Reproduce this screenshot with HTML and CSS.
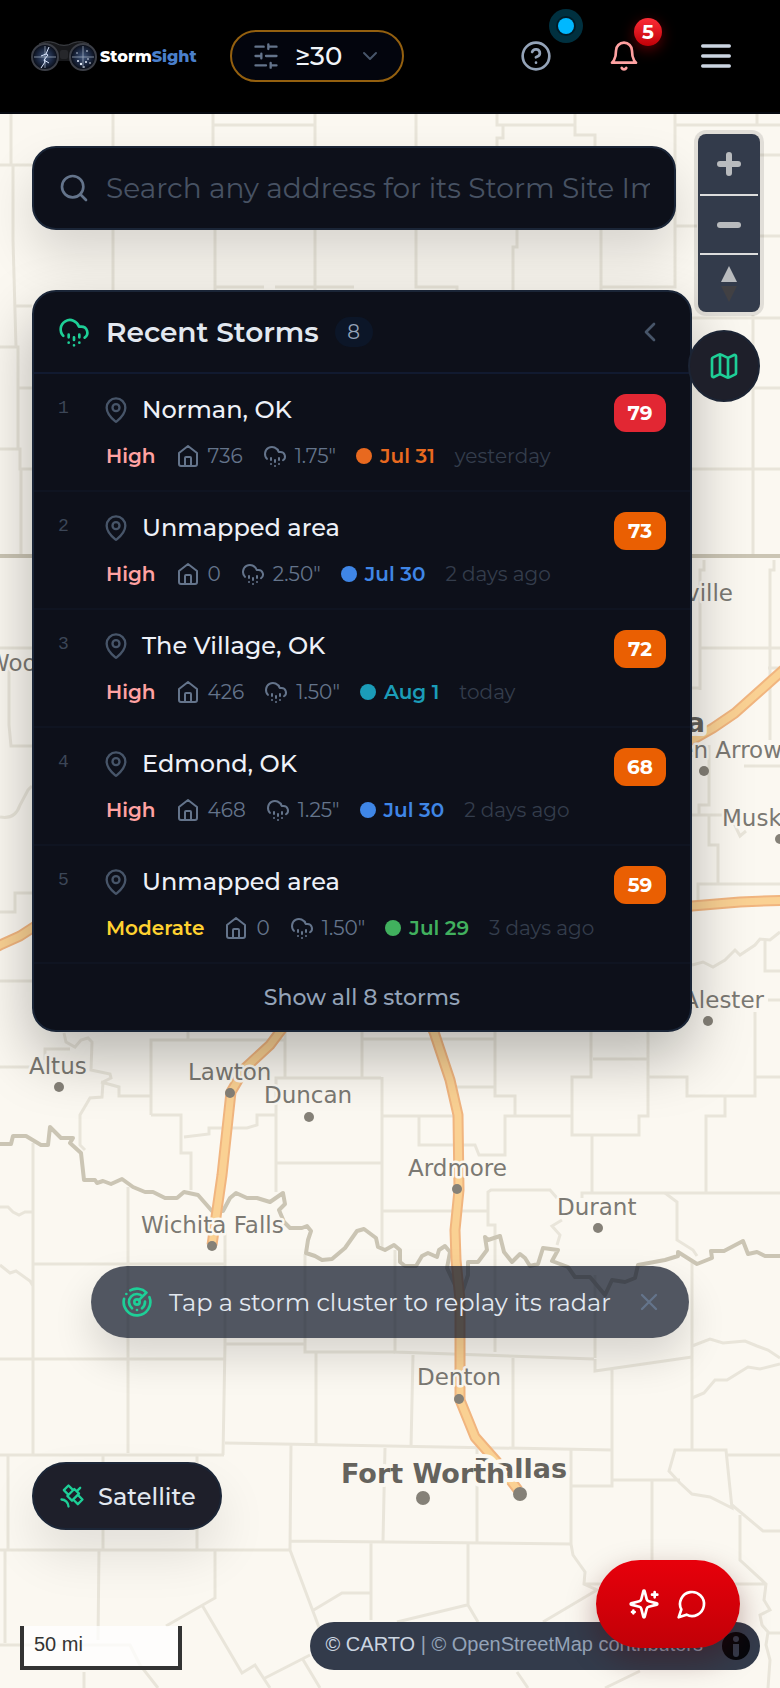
FILE: index.html
```html
<!DOCTYPE html>
<html lang="en">
<head>
  <meta charset="UTF-8">
  <meta name="viewport" content="width=device-width, initial-scale=1.0">
  <title>StormSight</title>
  <link rel="stylesheet" href="styles.css">
</head>
<body>
  <!-- shared icons -->
  <svg class="sprite" aria-hidden="true">
    <symbol id="i-hail" viewBox="0 0 24 24"><path d="M4 14.899A7 7 0 1 1 15.71 8h1.79a4.5 4.5 0 0 1 2.5 8.242M16 14v2M8 14v2M16 20h.01M8 20h.01M12 16v2M12 22h.01"/></symbol>
    <symbol id="i-pin" viewBox="0 0 24 24"><path d="M20 10c0 4.993-5.539 10.193-7.399 11.799a1 1 0 0 1-1.202 0C9.539 20.193 4 14.993 4 10a8 8 0 0 1 16 0"/><circle cx="12" cy="10" r="3"/></symbol>
    <symbol id="i-home" viewBox="0 0 24 24"><path d="m3 9 9-7 9 7v11a2 2 0 0 1-2 2H5a2 2 0 0 1-2-2zM9 22v-8a1 1 0 0 1 1-1h4a1 1 0 0 1 1 1v8"/></symbol>
  </svg>

  <header class="topbar">
    <a class="logo" href="#">
      <svg class="logo-mark" viewBox="0 0 66 34" aria-hidden="true">
        <defs>
          <radialGradient id="lens">
            <stop offset="0" stop-color="#41577c"/>
            <stop offset="0.6" stop-color="#1b2740"/>
            <stop offset="1" stop-color="#070a12"/>
          </radialGradient>
        </defs>
        <path d="M6 7 Q14 0 24 3 Q33 8 42 3 Q52 0 60 7 L50 22 H16z" fill="#17181b"/>
        <path d="M8 5 Q15 1 24 4 Q33 9 42 4 Q51 1 58 5" fill="none" stroke="#3b3d42"/>
        <rect x="29" y="11" width="8" height="9" rx="2" fill="#26272b"/>
        <circle cx="14" cy="18" r="13" fill="url(#lens)" stroke="#3c3f47" stroke-width="2"/>
        <circle cx="52" cy="18" r="13" fill="url(#lens)" stroke="#3c3f47" stroke-width="2"/>
        <path d="M3 18h22M14 7v22M41 18h22M52 7v22" stroke="#9aa6b8" stroke-width="0.8"/>
        <path d="M18 8l-3 7 2 1-4 5 1 2-4 6M15 15l-5 2M13 21l5 3" fill="none" stroke="#dce8ff"/>
        <g fill="#e6eefc"><circle cx="47" cy="22" r="1"/><circle cx="50" cy="25" r="1.2"/><circle cx="55" cy="23" r="1"/><circle cx="57" cy="20" r="0.8"/><circle cx="53" cy="28" r="0.8"/><circle cx="46" cy="14" r="0.7"/><circle cx="56" cy="12" r="0.8"/><circle cx="59" cy="24" r="0.8"/></g>
      </svg>
      <span class="logo-text">Storm<span class="logo-blue">Sight</span></span>
    </a>
    <button class="filter" type="button" aria-label="Minimum score">
      <svg class="icon icon-28" viewBox="0 0 24 24"><path d="M21 4h-7M10 4H3M21 12h-9M8 12H3M21 20h-5M12 20H3M14 2v4M8 10v4M16 18v4"/></svg>
      <span>≥30</span>
      <svg class="icon icon-24 dim" viewBox="0 0 24 24"><path d="m6 9 6 6 6-6"/></svg>
    </button>
    <nav class="actions">
      <button class="action help" type="button" aria-label="Help">
        <svg class="icon icon-32" viewBox="0 0 24 24"><circle cx="12" cy="12" r="10"/><path d="M9.09 9a3 3 0 0 1 5.83 1c0 2-3 3-3 3M12 17h.01"/></svg>
        <span class="pulse"></span>
      </button>
      <button class="action bell" type="button" aria-label="Alerts">
        <svg class="icon icon-32" viewBox="0 0 24 24"><path d="M6 8a6 6 0 0 1 12 0c0 7 3 9 3 9H3s3-2 3-9M10.300 21a1.940 1.940 0 0 0 3.400 0"/></svg>
        <span class="count">5</span>
      </button>
      <button class="action menu" type="button" aria-label="Menu">
        <svg class="icon icon-40" viewBox="0 0 24 24"><path d="M4 6h16M4 12h16M4 18h16"/></svg>
      </button>
    </nav>
  </header>

  <main class="map">
    <svg class="map-canvas" viewBox="0 114 780 1574" preserveAspectRatio="xMidYMin slice" aria-label="Map">
      <!-- county lines -->
      <g class="county">
        <path d="M11 114V165M0 165H32M13 165V240L16 347M113 114V290M213 114V146M213 125H315M315 114V290M416 114V287H457V290M215 230V290M216 287H264M275 287H354"/>
        <path d="M497 114V125H575M503 125V138H497V146M575 114V135H595V146M675 114V287H601M675 125H780M757 114V125M760 155H780M675 226H697M760 236H780M517 230V247H513V290M601 230V290"/>
        <path d="M16 306H32M0 347H18V449M18 388H32M0 449H20V469H32M21 469V555M0 648H32M9 670V725L11 746H32M0 817Q15 820 20 805L28 790 32 786M32 893H15V912H0M0 981H32"/>
        <path d="M692 318H780M753 315V555M753 388H780M692 469H780M704 560V570H700V690M774 560V570H770V740M700 648H780M768 668H780M692 688H700M744 766H780M709 745V805H699V814M692 815H730L740 836 746 831M709 815V845H718V883M698 900V884H780"/>
        <path d="M692 965 703 962 713 967 725 960 735 950 740 955 755 945 760 939 770 940 780 932M765 940V971H780M768 1000H780"/>
        <path d="M64 1033 66 1042 75 1047 81 1040 88 1038 92 1042 91 1070 110 1074 111 1078 103 1082 102 1097 90 1098 80 1115 80 1145 85 1150M45 1060V1049H70M0 1067H30M101 1082 119 1087V1096H151M151 1115V1040H285M188 1032V1039M151 1115H181V1153H191V1190M184 1137 209 1134V1128H247L257 1125V1115H275M276 1192V1078H381M285 1032V1077M362 1032V1077M362 1039H495M382 1077V1250M276 1163H381"/>
        <path d="M33 1143V1455M0 1207H8L13 1212 19 1215 25 1212H33M33 1264H225M128 1187V1453M225 1230V1344L223 1455M305 1254V1352H395M225 1344H305M0 1359H225M0 1265 10 1273 16 1271 30 1281 33 1286M381 1211H488"/>
        <path d="M382 1116H453M419 1116V1145H475L479 1155H505V1116H571M495 1032V1096H515V1115M455 1087H495M591 1032V1077H572V1135H639V1116H648V1032M593 1059H648M648 1077H687V1096H755V1012M755 1077H780M725 1096V1116H706V1193M592 1135V1193M582 1198V1193H780"/>
        <path d="M488 1212V1192L491 1190H550L557 1198M488 1212V1225H495V1352M562 1220 552 1226 560 1235 557 1245M665 1193 677 1202V1240L693 1250 697 1256M692 1262V1450M595 1275V1358M395 1250V1352L594 1359M692 1346 710 1339 723 1343 745 1341 757 1346 768 1350 780 1358"/>
        <path d="M0 1455H224M225 1443 612 1450M316 1352V1445M8 1456V1550M103 1456V1550M197 1456V1550M291 1445 290 1550M385 1448 383 1541M0 1550H290M290 1541 571 1544M5 1550V1643M99 1550 98 1640M215 1550V1598L166 1626M290 1550 320 1630M202 1605 242 1673 255 1665 270 1688M312 1611 342 1593H371M371 1542V1620M265 1678 310 1655M302 1658 320 1688M84 1672V1688M0 1645H130L140 1665 158 1688"/>
        <path d="M413 1355 411 1447M513 1358V1448M571 1448V1544L573 1555 585 1572 584 1584 597 1590 543 1622M612 1370V1486H572M595 1359V1371L692 1357M612 1480H680M675 1450H726L732 1508 710 1497 692 1494 680 1483 669 1471zM728 1455H780M732 1505 763 1531H780M740 1515V1560L766 1584 764 1600 770 1610 760 1615 762 1625 768 1632 766 1645 770 1660 768 1688M652 1481V1585M585 1584H765M477 1449V1542M468 1543V1605L478 1622M397 1622 467 1605M692 1398 704 1393 715 1380 727 1380 748 1367 760 1369 780 1364M517 1672 528 1688M768 1633H780M605 1688 640 1671"/>
      </g>
      <!-- state lines -->
      <g class="state">
        <path d="M0 556H780"/>
        <path d="M0 1144H11L13 1136H26L41 1145H48L50 1127 61 1138H73L70 1143 81 1153 84 1180H95L97 1183 103 1181 111 1184 122 1179 133 1187 145 1192H153L165 1198H177L184 1192 198 1195 212 1211H223L230 1198 236 1193 247 1198H257L270 1202 283 1193 285 1204 279 1210 284 1222 290 1228H302L307 1226 311 1231 308 1240 306 1253 315 1256 322 1260 332 1259 345 1248 357 1231 364 1229 376 1238 378 1247 385 1250 394 1245 400 1250V1262L405 1266H416L422 1256 428 1253 437 1257 439 1250 445 1246 450 1252 447 1268 455 1285 463 1290 468 1275 468 1262 478 1262 487 1250 485 1237 488 1240 500 1236 504 1252 512 1262 520 1254 525 1258 530 1266 538 1264 543 1248 558 1250 552 1261 568 1267 575 1277H590L605 1295 612 1280 625 1282 635 1278 638 1265 665 1260 678 1256V1252L697 1264 712 1258 711 1251H724L743 1241 748 1254 757 1252 765 1256H780"/>
      </g>
      <!-- interstates -->
      <g class="road-edge">
        <path id="i44" d="M285 1025 270 1045 245 1068 231 1092 222 1175 212 1245"/>
        <path id="i35" d="M420 1000 434 1032 450 1080 458 1115 459 1190 455 1230 456 1260 460 1300V1400L475 1437 497 1462 518 1490"/>
        <path id="ne" d="M670 750 692 740 713 728 735 713 790 664"/>
        <path id="i40" d="M680 908 692 906 740 902 790 900M-10 950 0 945 20 936 40 923"/>
      </g>
      <g class="road">
        <use href="#i44"/><use href="#i35"/><use href="#ne"/><use href="#i40"/>
      </g>
      <g class="dots">
        <circle cx="59" cy="1087" r="5"/><circle cx="230" cy="1093" r="5"/><circle cx="309" cy="1117" r="5"/>
        <circle cx="212" cy="1246" r="5"/><circle cx="457" cy="1189" r="5"/><circle cx="598" cy="1228" r="5"/>
        <circle cx="459" cy="1399" r="5"/><circle cx="704" cy="771" r="5"/><circle cx="780" cy="839" r="5"/>
        <circle cx="708" cy="1021" r="5"/><circle cx="423" cy="1498" r="7"/><circle cx="520" cy="1494" r="7"/>
      </g>
      <g class="town">
        <text x="29" y="1074">Altus</text>
        <text x="188" y="1080">Lawton</text>
        <text x="264" y="1103">Duncan</text>
        <text x="141" y="1233">Wichita Falls</text>
        <text x="408" y="1176">Ardmore</text>
        <text x="557" y="1215">Durant</text>
        <text x="417" y="1385">Denton</text>
        <text x="733" y="601" text-anchor="end">Bartlesville</text>
        <text x="782" y="758" text-anchor="end">Broken Arrow</text>
        <text x="722" y="826">Muskogee</text>
        <text x="764" y="1008" text-anchor="end">McAlester</text>
        <text x="-13" y="671">Woodward</text>
      </g>
      <g class="town city">
        <text x="705" y="732" text-anchor="end">Tulsa</text>
        <text x="567" y="1478" text-anchor="end">Dallas</text>
        <text x="341" y="1483">Fort Worth</text>
      </g>
    </svg>

    <div class="column">
      <label class="search">
        <svg class="icon icon-32" viewBox="0 0 24 24"><circle cx="11" cy="11" r="8"/><path d="m21 21-4.300-4.300"/></svg>
        <input type="text" aria-label="Search any address" placeholder="Search any address for its Storm Site Impact">
      </label>

      <section class="panel">
        <div class="panel-head">
          <svg class="icon icon-32 green"><use href="#i-hail"/></svg>
          <h2>Recent Storms</h2>
          <span class="total">8</span>
          <button class="collapse" type="button" aria-label="Collapse">
            <svg class="icon icon-32" viewBox="0 0 24 24"><path d="m15 18-6-6 6-6"/></svg>
          </button>
        </div>
        <ol class="storms">
          <li class="storm">
            <span class="rank">1</span>
            <div class="info">
              <div class="place"><svg class="icon icon-28"><use href="#i-pin"/></svg>Norman, OK</div>
              <div class="meta">
                <span class="level high">High</span>
                <span class="stat"><svg class="icon icon-24"><use href="#i-home"/></svg>736</span>
                <span class="stat"><svg class="icon icon-24"><use href="#i-hail"/></svg>1.75"</span>
                <span class="date orange">Jul 31</span>
                <span class="ago">yesterday</span>
              </div>
            </div>
            <span class="score severe">79</span>
          </li>
          <li class="storm">
            <span class="rank">2</span>
            <div class="info">
              <div class="place"><svg class="icon icon-28"><use href="#i-pin"/></svg>Unmapped area</div>
              <div class="meta">
                <span class="level high">High</span>
                <span class="stat"><svg class="icon icon-24"><use href="#i-home"/></svg>0</span>
                <span class="stat"><svg class="icon icon-24"><use href="#i-hail"/></svg>2.50"</span>
                <span class="date blue">Jul 30</span>
                <span class="ago">2 days ago</span>
              </div>
            </div>
            <span class="score">73</span>
          </li>
          <li class="storm">
            <span class="rank">3</span>
            <div class="info">
              <div class="place"><svg class="icon icon-28"><use href="#i-pin"/></svg>The Village, OK</div>
              <div class="meta">
                <span class="level high">High</span>
                <span class="stat"><svg class="icon icon-24"><use href="#i-home"/></svg>426</span>
                <span class="stat"><svg class="icon icon-24"><use href="#i-hail"/></svg>1.50"</span>
                <span class="date teal">Aug 1</span>
                <span class="ago">today</span>
              </div>
            </div>
            <span class="score">72</span>
          </li>
          <li class="storm">
            <span class="rank">4</span>
            <div class="info">
              <div class="place"><svg class="icon icon-28"><use href="#i-pin"/></svg>Edmond, OK</div>
              <div class="meta">
                <span class="level high">High</span>
                <span class="stat"><svg class="icon icon-24"><use href="#i-home"/></svg>468</span>
                <span class="stat"><svg class="icon icon-24"><use href="#i-hail"/></svg>1.25"</span>
                <span class="date blue">Jul 30</span>
                <span class="ago">2 days ago</span>
              </div>
            </div>
            <span class="score">68</span>
          </li>
          <li class="storm">
            <span class="rank">5</span>
            <div class="info">
              <div class="place"><svg class="icon icon-28"><use href="#i-pin"/></svg>Unmapped area</div>
              <div class="meta">
                <span class="level moderate">Moderate</span>
                <span class="stat"><svg class="icon icon-24"><use href="#i-home"/></svg>0</span>
                <span class="stat"><svg class="icon icon-24"><use href="#i-hail"/></svg>1.50"</span>
                <span class="date lime">Jul 29</span>
                <span class="ago">3 days ago</span>
              </div>
            </div>
            <span class="score">59</span>
          </li>
        </ol>
        <button class="show-all" type="button">Show all 8 storms</button>
      </section>
    </div>

    <div class="map-tools">
      <div class="zoom">
        <button type="button" aria-label="Zoom in"><svg viewBox="0 0 58 58"><path d="M29 20v18M20 29h18"/></svg></button>
        <button type="button" aria-label="Zoom out"><svg viewBox="0 0 58 58"><path d="M20 29h18"/></svg></button>
        <button type="button" aria-label="Reset north"><svg viewBox="0 0 58 58"><path class="north" d="M29 11l8 16H21z"/><path class="south" d="M29 47l8-16H21z"/></svg></button>
      </div>
      <button class="layers" type="button" aria-label="Map layers">
        <svg class="icon icon-32 green" viewBox="0 0 24 24"><path d="M14.106 5.553a2 2 0 0 0 1.788 0l3.659-1.830A1 1 0 0 1 21 4.619v12.764a1 1 0 0 1-.553.894l-4.553 2.277a2 2 0 0 1-1.788 0l-4.212-2.106a2 2 0 0 0-1.788 0l-3.659 1.830A1 1 0 0 1 3 19.381V6.618a1 1 0 0 1 .553-.894l4.553-2.277a2 2 0 0 1 1.788 0zM15 5.764v15M9 3.236v15"/></svg>
      </button>
    </div>

    <div class="toast" role="status">
      <svg class="icon icon-32 green" viewBox="0 0 24 24"><path d="M19.070 4.930A10 10 0 0 0 6.990 3.340M4 6h.01M2.290 9.620A10 10 0 1 0 21.310 8.350M16.240 7.760A6 6 0 1 0 8.230 16.670M12 18h.01M17.990 11.660A6 6 0 0 1 15.770 16.670M13.410 10.590l5.660-5.660"/><circle cx="12" cy="12" r="2"/></svg>
      <span>Tap a storm cluster to replay its radar</span>
      <button class="close" type="button" aria-label="Dismiss">
        <svg class="icon icon-28" viewBox="0 0 24 24"><path d="M18 6 6 18M6 6l12 12"/></svg>
      </button>
    </div>

    <button class="satellite" type="button">
      <svg class="icon icon-28 green" viewBox="0 0 24 24"><path d="M13 7 9 3 5 7l4 4M17 11l4 4-4 4-4-4M8 12l4 4 6-6-4-4ZM16 8l3-3M9 21a6 6 0 0 0-6-6"/></svg>
      Satellite
    </button>

    <footer class="map-footer">
      <div class="scale">50 mi</div>
      <div class="credits">
        <span><a class="carto" href="#">© CARTO</a> | <a href="#">© OpenStreetMap contributors</a></span>
        <button class="about" type="button" aria-label="Toggle attribution">
          <svg viewBox="0 0 28 28"><circle cx="14" cy="14" r="14" fill="#05070b"/><circle cx="14" cy="7" r="3" fill="#333b4b"/><path d="M11 12h6v10a2 2 0 0 1-6 0z" fill="#333b4b"/></svg>
        </button>
      </div>
    </footer>

    <button class="chat" type="button" aria-label="Ask the assistant">
      <svg class="icon icon-32" viewBox="0 0 24 24"><path d="M9.937 15.500A2 2 0 0 0 8.500 14.063l-6.135-1.582a.5.5 0 0 1 0-.962L8.500 9.936A2 2 0 0 0 9.937 8.500l1.582-6.135a.5.5 0 0 1 .963 0L14.063 8.500A2 2 0 0 0 15.500 9.937l6.135 1.581a.5.5 0 0 1 0 .964L15.500 14.063a2 2 0 0 0-1.437 1.437l-1.582 6.135a.5.5 0 0 1-.963 0zM20 3v4M22 5h-4M4 17v2M5 18H3"/></svg>
      <svg class="icon icon-32" viewBox="0 0 24 24"><path d="M7.900 20A9 9 0 1 0 4 16.100L2 22Z"/></svg>
    </button>
  </main>
</body>
</html>
```
FILE: styles.css
```css
* {
  box-sizing: border-box;
}

body {
  margin: 0;
  min-height: 100vh;
  display: flex;
  flex-direction: column;
  background: #fbf8f1;
  color: #e2e8f0;
  font-family: "Montserrat", "Inter", sans-serif;
  font-size: 24px;
}

button {
  margin: 0;
  padding: 0;
  border: 0;
  background: none;
  color: inherit;
  font: inherit;
  cursor: pointer;
}

a {
  color: inherit;
  text-decoration: none;
}

.sprite {
  display: none;
}

.icon {
  flex: none;
  fill: none;
  stroke: currentColor;
  stroke-width: 2;
  stroke-linecap: round;
  stroke-linejoin: round;
}

.icon-24 { width: 24px; height: 24px; }
.icon-28 { width: 28px; height: 28px; }
.icon-32 { width: 32px; height: 32px; }
.icon-40 { width: 40px; height: 40px; }

.green {
  color: #1ecf97;
}

/* Header */
.topbar {
  height: 114px;
  padding: 0 28px 0 31px;
  display: flex;
  align-items: center;
  background: #000;
  border-bottom: 2px solid #05080f;
}

.logo {
  display: flex;
  align-items: center;
  gap: 3px;
  margin-right: 33px;
}

.logo-mark {
  width: 66px;
  height: 34px;
}

.logo-text {
  color: #fff;
  font-size: 16px;
  font-weight: 800;
}

.logo-blue {
  color: #4a7fcb;
}

.filter {
  width: 174px;
  height: 52px;
  padding: 0 20px;
  display: flex;
  align-items: center;
  justify-content: space-between;
  border: 2px solid #94600f;
  border-radius: 26px;
  background: #03050d;
  color: #f1f5f9;
  font-size: 26px;
  font-weight: 500;
}

.filter .icon {
  color: #64748b;
}

.filter .dim {
  color: #475569;
}

.actions {
  margin-left: auto;
  display: flex;
  align-items: center;
  gap: 24px;
}

.action {
  position: relative;
  width: 64px;
  height: 64px;
  display: flex;
  align-items: center;
  justify-content: center;
  color: #94a3b8;
}

.pulse {
  position: absolute;
  top: -6px;
  right: -6px;
  width: 16px;
  height: 16px;
  border-radius: 50%;
  background: #00b8ff;
  box-shadow: 0 0 0 2px #001c28, 0 0 0 9px #00303f;
}

.bell {
  color: #ffa2a2;
}

.count {
  position: absolute;
  top: -6px;
  right: -6px;
  width: 28px;
  height: 28px;
  border-radius: 50%;
  background: linear-gradient(#fb2c36, #c10007);
  box-shadow: 0 4px 14px rgba(231, 0, 11, 0.4);
  color: #fff;
  font-size: 20px;
  font-weight: 700;
  line-height: 28px;
}

.menu {
  width: 72px;
  color: #cbd5e1;
}

/* Map */
.map {
  position: relative;
  flex: 1;
  display: flex;
  flex-direction: column;
  overflow: hidden;
}

.map-canvas {
  position: absolute;
  inset: 0;
  width: 100%;
  height: 100%;
}

.county {
  fill: none;
  stroke: #e9e5da;
  stroke-width: 3;
}

.state {
  fill: none;
  stroke: #cbc5b4;
  stroke-width: 4;
  stroke-linejoin: round;
}

.road-edge {
  fill: none;
  stroke: #f1b57f;
  stroke-width: 11;
  stroke-linejoin: round;
}

/* .road re-uses the edge paths, so they must not set their own stroke */
.road {
  fill: none;
  stroke: #fad193;
  stroke-width: 7;
  stroke-linejoin: round;
}

.dots {
  fill: #858178;
}

.town {
  font-family: "DejaVu Sans", sans-serif;
  font-size: 23px;
  fill: #7b7973;
  stroke: #fbf8f1;
  stroke-width: 5;
  stroke-linejoin: round;
  paint-order: stroke;
}

.city {
  font-size: 27px;
  font-weight: 700;
  fill: #65635d;
  stroke-width: 8;
}

.column {
  position: relative;
  padding: 32px 88px 60px 32px;
  display: flex;
  flex-direction: column;
  gap: 60px;
}

.search {
  height: 84px;
  margin-right: 16px;
  padding: 0 24px;
  display: flex;
  align-items: center;
  gap: 16px;
  border: 2px solid #1a2537;
  border-radius: 24px;
  background: #0d101a;
  box-shadow: 0 25px 50px rgba(0, 0, 0, 0.14);
  color: #64748b;
}

.search input {
  flex: 1;
  min-width: 0;
  padding: 0;
  border: 0;
  outline: 0;
  background: none;
  color: #e2e8f0;
  font: inherit;
  font-size: 28px;
}

.search input::placeholder {
  color: #475263;
  opacity: 1;
}

.panel {
  border: 2px solid #1a2537;
  border-radius: 24px;
  background: #0d101a;
  box-shadow: 0 25px 60px rgba(0, 0, 0, 0.28);
}

.panel-head {
  height: 82px;
  padding: 0 24px;
  display: flex;
  align-items: center;
  gap: 16px;
  border-bottom: 2px solid #111a30;
}

.panel-head h2 {
  margin: 0;
  font-size: 28px;
  font-weight: 600;
}

.total {
  width: 38px;
  height: 30px;
  border-radius: 15px;
  background: #0c1628;
  color: #94a3b8;
  font-size: 20px;
  line-height: 30px;
  text-align: center;
}

.collapse {
  margin-left: auto;
  height: 32px;
  color: #475569;
}

.storms {
  margin: 0;
  padding: 0;
  list-style: none;
}

.storm {
  padding: 20px 24px;
  display: flex;
  align-items: flex-start;
  border-bottom: 2px solid #0f1421;
}

.rank {
  width: 44px;
  color: #3c4657;
  font-family: "Liberation Mono", monospace;
  font-size: 18px;
  line-height: 28px;
}

.info {
  flex: 1;
}

.place {
  display: flex;
  align-items: center;
  gap: 12px;
  color: #eef1f8;
  font-weight: 500;
  line-height: 32px;
}

.place .icon {
  color: #475569;
}

.meta {
  margin-top: 16px;
  padding-left: 4px;
  display: flex;
  align-items: center;
  gap: 20px;
  color: #64748b;
  font-size: 20px;
  line-height: 28px;
  white-space: nowrap;
}

.stat,
.date {
  display: flex;
  align-items: center;
  gap: 8px;
}

.level,
.date {
  font-weight: 600;
}

.high { color: #ffa2a2; }
.moderate { color: #ffd230; }

.date::before {
  content: "";
  width: 16px;
  height: 16px;
  border-radius: 50%;
  background: currentColor;
}

.orange { color: #e8691f; }
.blue { color: #3f86e6; }
.teal { color: #1b9cb8; }
.lime { color: #41b05e; }

.ago {
  color: #343d4c;
}

.score {
  width: 52px;
  height: 38px;
  border-radius: 12px;
  background: #ea5f02;
  color: #fff;
  font-size: 20px;
  font-weight: 700;
  line-height: 38px;
  text-align: center;
}

.severe {
  background: #e22733;
}

.show-all {
  width: 100%;
  height: 66px;
  color: #94a3b8;
  font-size: 22px;
  font-weight: 500;
}

/* Zoom and layer buttons */
.map-tools {
  position: absolute;
  top: 20px;
  right: 20px;
  display: flex;
  flex-direction: column;
  align-items: flex-end;
  gap: 18px;
}

.zoom {
  padding: 0 2px;
  border-radius: 8px;
  background: #333b4b;
  box-shadow: 0 0 0 4px rgba(0, 0, 0, 0.1);
}

.zoom button {
  display: block;
  width: 58px;
  height: 60px;
}

.zoom button + button {
  height: 59px;
  border-top: 2px solid #ddd;
}

.zoom svg {
  display: block;
  fill: none;
  stroke: #b9bbbe;
  stroke-width: 6;
  stroke-linecap: round;
}

.zoom .north {
  fill: #b9bbbe;
  stroke: none;
}

.zoom .south {
  fill: #414043;
  stroke: none;
}

.layers {
  width: 72px;
  height: 72px;
  display: flex;
  align-items: center;
  justify-content: center;
  border: 2px solid #1c2434;
  border-radius: 50%;
  background: #1e1f2a;
}

/* Bottom overlays */
.toast {
  position: relative;
  align-self: center;
  width: 598px;
  max-width: 90%;
  height: 72px;
  margin-top: auto;
  margin-bottom: 124px;
  padding: 0 26px 0 30px;
  display: flex;
  align-items: center;
  gap: 16px;
  border-radius: 36px;
  background: rgba(15, 23, 42, 0.72);
  box-shadow: 0 20px 40px rgba(0, 0, 0, 0.14);
}

.close {
  margin-left: auto;
  height: 28px;
  color: #64748b;
}

.satellite {
  position: relative;
  align-self: flex-start;
  height: 68px;
  margin: 0 0 92px 32px;
  padding: 0 24px;
  display: flex;
  align-items: center;
  gap: 12px;
  border: 2px solid #1c2637;
  border-radius: 34px;
  background: #1e1f2a;
  box-shadow: 0 25px 50px rgba(0, 0, 0, 0.1);
  font-weight: 500;
}

.map-footer {
  position: relative;
  padding: 0 20px 18px;
  display: flex;
  align-items: flex-end;
  justify-content: space-between;
  font-family: "Liberation Sans", sans-serif;
  font-size: 20px;
}

.scale {
  width: 162px;
  height: 44px;
  padding-left: 10px;
  border: 4px solid #333;
  border-top: 0;
  background: rgba(255, 255, 255, 0.75);
  color: #333;
  line-height: 36px;
}

.credits {
  height: 48px;
  padding: 0 10px 4px 16px;
  display: flex;
  align-items: center;
  gap: 19px;
  border-radius: 24px;
  background: #333b4b;
  color: #94a3b8;
}

.carto {
  color: #cbd5e1;
}

.about {
  width: 28px;
  height: 28px;
  margin-top: 4px;
}

.about svg {
  display: block;
}

.chat {
  position: absolute;
  right: 40px;
  bottom: 40px;
  width: 144px;
  height: 88px;
  display: flex;
  align-items: center;
  justify-content: center;
  gap: 16px;
  border-radius: 44px;
  background: linear-gradient(#e7000b, #c10007);
  box-shadow: 0 12px 30px rgba(70, 0, 5, 0.35);
  color: #fff;
}
```
